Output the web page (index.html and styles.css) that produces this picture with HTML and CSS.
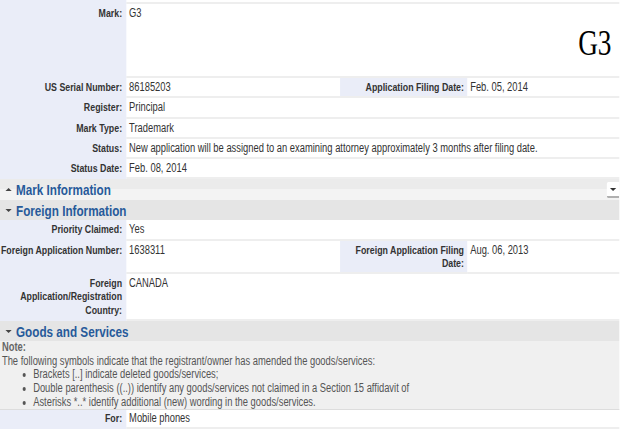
FILE: index.html
```html
<!DOCTYPE html>
<html>
<head>
<meta charset="utf-8">
<link rel="stylesheet" href="styles.css">
</head>
<body>
<div class="page">
  <div class="row top"><div class="lbl"></div><div class="val span3"></div></div>
  <div class="row mark">
    <div class="lbl">Mark:</div>
    <div class="val span3 markval"><span>G3</span><span class="bigmark">G3</span></div>
  </div>
  <div class="row">
    <div class="lbl">US Serial Number:</div><div class="val">86185203</div>
    <div class="lbl2">Application Filing Date:</div><div class="val">Feb. 05, 2014</div>
  </div>
  <div class="row"><div class="lbl">Register:</div><div class="val span3">Principal</div></div>
  <div class="row"><div class="lbl">Mark Type:</div><div class="val span3">Trademark</div></div>
  <div class="row"><div class="lbl">Status:</div><div class="val span3">New application will be assigned to an examining attorney approximately 3 months after filing date.</div></div>
  <div class="row"><div class="lbl">Status Date:</div><div class="val span3">Feb. 08, 2014</div></div>

  <div class="hdr collapsed"><span class="arrow up"></span>Mark Information<span class="menu"></span></div>
  <div class="hdr"><span class="arrow down"></span>Foreign Information</div>

  <div class="row"><div class="lbl">Priority Claimed:</div><div class="val span3">Yes</div></div>
  <div class="row">
    <div class="lbl nowrap">Foreign Application Number:</div><div class="val">1638311</div>
    <div class="lbl2">Foreign Application Filing Date:</div><div class="val">Aug. 06, 2013</div>
  </div>
  <div class="row"><div class="lbl">Foreign Application/Registration Country:</div><div class="val span3">CANADA</div></div>

  <div class="hdr"><span class="arrow down"></span>Goods and Services</div>
  <div class="note">
    <div class="note-title">Note:</div>
    <div>The following symbols indicate that the registrant/owner has amended the goods/services:</div>
    <ul>
      <li>Brackets [..] indicate deleted goods/services;</li>
      <li>Double parenthesis ((..)) identify any goods/services not claimed in a Section 15 affidavit of</li>
      <li>Asterisks *..* identify additional (new) wording in the goods/services.</li>
    </ul>
  </div>
  <div class="row for"><div class="lbl">For:</div><div class="val span3">Mobile phones</div></div>
</div>
</body>
</html>
```
FILE: styles.css
```css
* { box-sizing: border-box; }
html, body { margin: 0; padding: 0; background: #fff; overflow: hidden; }
body {
  font-family: "Liberation Sans", Arial, sans-serif;
  font-size: 12px;
  color: #333;
}
/* the reference is a horizontally condensed rendering of a wider page */
.page {
  width: 794px;
  transform: scaleX(0.78);
  transform-origin: 0 0;
}
.row {
  display: grid;
  grid-template-columns: 161.5px 274.5px 162.8px 1fr;
  line-height: 13.25px;
}
.lbl, .lbl2, .val {
  padding: 3px 4px 2px 4px;
  border-bottom: 2px solid #eeeeee;
}
.lbl {
  background: #eaedf8;
  border-bottom-color: #eaedf8;
  text-align: right;
  font-size: 11.3px;
  font-weight: bold;
  padding-left: 0;
  padding-right: 5px;
}
.lbl2 {
  background: #eaedf8;
  text-align: right;
  font-size: 11.3px;
  font-weight: bold;
  padding-right: 4px;
}
.nowrap { white-space: nowrap; }
.span3 { grid-column: span 3; }
.top > * { height: 4px; padding: 0; }
.mark > * { height: 74px; }
.markval {
  display: flex;
  justify-content: space-between;
  align-items: flex-start;
}
.bigmark {
  font-family: "Liberation Serif", "Times New Roman", serif;
  font-size: 35px;
  line-height: 35px;
  margin-top: 18.5px;
  margin-right: 6px;
  color: #000;
}
.hdr {
  height: 20.5px;
  display: flex;
  align-items: center;
  padding-left: 6.5px;
  font-size: 15px;
  font-weight: bold;
  color: #275a9a;
  background: #e5e5e5;
}
.hdr.collapsed { background: linear-gradient(#ebebeb 50%, #f3f3f3 50%); }
.arrow {
  width: 0;
  height: 0;
  border-left: 4px solid transparent;
  border-right: 4px solid transparent;
  margin-right: 6px;
}
.arrow.up { border-bottom: 3px solid #444; }
.arrow.down { border-top: 3px solid #444; }
.menu {
  margin-left: auto;
  align-self: flex-start;
  margin-top: 3px;
  width: 16px;
  height: 16px;
  background: #fff;
  border-bottom: 2px solid #b0b0b0;
  border-radius: 2px 0 0 2px;
  display: flex;
  align-items: center;
  justify-content: center;
}
.menu::before {
  content: "";
  border-left: 4px solid transparent;
  border-right: 4px solid transparent;
  border-top: 3px solid #333;
}
.note {
  background: #f0f0f0;
  border-bottom: 1px solid #dddddd;
  padding: 0 2.5px;
  line-height: 13.6px;
  color: #555;
}
.note-title { font-weight: bold; color: #666; }
.note ul { margin: 0; padding-left: 40px; }
.for > * { padding-top: 2px; }
```
